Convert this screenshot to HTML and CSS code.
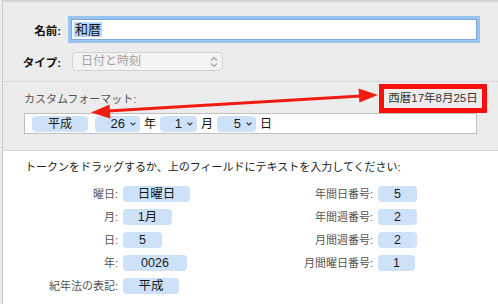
FILE: index.html
```html
<!DOCTYPE html>
<html>
<head>
    <title>日付の書式</title>
    <link rel="stylesheet" href="styles.css">
</head>
<body>
    <div class="sheet">
        <div class="top">
            <div class="field-row name-row">
                <label class="field-label">名前:</label>
                <div class="name-input"><span class="selected">和暦</span></div>
            </div>
            <div class="field-row type-row">
                <label class="field-label">タイプ:</label>
                <div class="popup">
                    <span>日付と時刻</span>
                    <svg class="updown" width="8" height="12" viewBox="0 0 8 12">
                        <path d="M1 4.5 L4 1.5 L7 4.5 M1 7.5 L4 10.5 L7 7.5" fill="none" stroke="#a2a2a2" stroke-width="1.2"/>
                    </svg>
                </div>
            </div>
        </div>

        <div class="middle">
            <div class="format-head">
                <span class="format-label">カスタムフォーマット:</span>
                <div class="preview">西暦17年8月25日</div>
            </div>
            <div class="format-field">
                <span class="token first">平成</span>
                <span class="token menu w45">26 <svg width="6" height="4" viewBox="0 0 6 4"><path d="M0.6 0.6 L3 3 L5.4 0.6" fill="none" stroke="#333" stroke-width="1.2"/></svg></span>
                <span class="plain">年</span>
                <span class="token menu w37">1 <svg width="6" height="4" viewBox="0 0 6 4"><path d="M0.6 0.6 L3 3 L5.4 0.6" fill="none" stroke="#333" stroke-width="1.2"/></svg></span>
                <span class="plain">月</span>
                <span class="token menu w39">5 <svg width="6" height="4" viewBox="0 0 6 4"><path d="M0.6 0.6 L3 3 L5.4 0.6" fill="none" stroke="#333" stroke-width="1.2"/></svg></span>
                <span class="plain">日</span>
            </div>
        </div>

        <div class="lower">
            <p class="hint">トークンをドラッグするか、上のフィールドにテキストを入力してください:</p>
            <div class="token-grid">
                <div class="col left">
                    <div class="row"><span class="row-label">曜日:</span><span class="token" style="width: 67px">日曜日</span></div>
                    <div class="row"><span class="row-label">月:</span><span class="token" style="width: 49px">1月</span></div>
                    <div class="row"><span class="row-label">日:</span><span class="token" style="width: 39px">5</span></div>
                    <div class="row"><span class="row-label">年:</span><span class="token" style="width: 64px">0026</span></div>
                    <div class="row"><span class="row-label">紀年法の表記:</span><span class="token" style="width: 56px">平成</span></div>
                </div>
                <div class="col right">
                    <div class="row"><span class="row-label">年間日番号:</span><span class="token" style="width: 39px">5</span></div>
                    <div class="row"><span class="row-label">年間週番号:</span><span class="token" style="width: 39px">2</span></div>
                    <div class="row"><span class="row-label">月間週番号:</span><span class="token" style="width: 39px">2</span></div>
                    <div class="row"><span class="row-label">月間曜日番号:</span><span class="token" style="width: 37px">1</span></div>
                </div>
            </div>
        </div>
    </div>

    <!-- annotation arrow drawn over the sheet -->
    <svg class="arrow" width="498" height="304" viewBox="0 0 498 304">
        <line x1="108" y1="111" x2="361" y2="96" stroke="#f21d12" stroke-width="3"/>
        <polygon points="91,112.5 110.4,118.5 109.6,104.5" fill="#f21d12"/>
        <polygon points="378,95 358.6,88.6 359.4,102.6" fill="#f21d12"/>
    </svg>
</body>
</html>
```

FILE: styles.css
```css
body {
    margin: 0;
    background-color: #ececec;
    font-family: "Liberation Sans", "Noto Sans CJK JP", sans-serif;
    font-size: 11px;
    color: #222;
    height: 304px;
    overflow: hidden;
    position: relative;
}
.sheet {
    margin-left: 2px;
    border-left: 1px solid #c9c9c9;
    height: 304px;
    box-shadow: inset 0 3px 3px -2px rgba(0,0,0,0.18);
}
.top {
    height: 82px;
    box-sizing: border-box;
    padding-top: 19px;
    border-bottom: 1px solid #d6d6d6;
}
.field-row {
    display: flex;
    align-items: center;
}
.field-label {
    width: 58px;
    text-align: right;
    font-weight: bold;
    font-size: 11.5px;
    color: #111;
}
.name-row {
    height: 21px;
}
.name-input {
    margin-left: 10px;
    width: 406px;
    height: 21px;
    box-sizing: border-box;
    border: 1px solid #80a8d8;
    box-shadow: 0 0 0 3px #98c4f2;
    background-color: white;
    display: flex;
    align-items: center;
    padding-left: 2px;
}
.selected {
    background-color: #b4d6fc;
    font-size: 13px;
    line-height: 15px;
    padding: 0 1px;
    color: #111;
}
.type-row {
    margin-top: 12px;
}
.popup {
    margin-left: 11px;
    width: 151px;
    height: 19px;
    box-sizing: border-box;
    border: 1px solid #d2d2d2;
    border-radius: 4px;
    background-color: #f3f3f3;
    display: flex;
    align-items: center;
    justify-content: space-between;
    padding: 0 4px 0 8px;
    color: #a4a4a4;
    font-size: 12px;
    line-height: 17px;
}
.middle {
    height: 69px;
    box-sizing: border-box;
    padding: 2px 21px 0 21px;
    border-bottom: 1px solid #d6d6d6;
}
.format-head {
    display: flex;
    justify-content: space-between;
    align-items: center;
    height: 29px;
}
.format-label {
    color: #555;
    line-height: 14px;
}
.preview {
    margin-right: -10px;
    width: 108px;
    height: 29px;
    box-sizing: border-box;
    border: 5px solid #f8110c;
    text-align: center;
    font-size: 11.5px;
    line-height: 19px;
    color: #333;
}
.format-field {
    height: 21px;
    box-sizing: border-box;
    border: 1px solid #bfbfbf;
    background-color: white;
    display: flex;
    align-items: center;
    gap: 4px;
    padding-left: 7px;
}
.token {
    display: inline-flex;
    align-items: center;
    justify-content: center;
    height: 16px;
    border-radius: 4px;
    background-color: #cde2f8;
    font-size: 12.5px;
    line-height: 16px;
    color: #1a1a1a;
}
.token.first {
    width: 56px;
    margin-right: 3px;
    font-size: 12px;
}
.token.menu {
    justify-content: flex-end;
    gap: 5px;
    padding-right: 4px;
    box-sizing: border-box;
    font-size: 13px;
}
.w45 { width: 45px; }
.w37 { width: 37px; }
.w39 { width: 39px; }
.plain {
    font-size: 12px;
    line-height: 16px;
    color: #111;
}
.lower {
    background-color: white;
    height: 153px;
}
.hint {
    margin: 0;
    padding: 8px 0 0 22px;
    line-height: 16px;
    color: #222;
}
.token-grid {
    display: flex;
    margin-top: 7px;
}
.col {
    display: flex;
    flex-direction: column;
}
.col.left {
    width: 250px;
}
.row {
    display: flex;
    align-items: center;
    height: 23px;
    gap: 5px;
}
.left .row-label {
    width: 115px;
}
.right .row-label {
    width: 120px;
}
.row-label {
    text-align: right;
    color: #555;
    line-height: 14px;
}
.arrow {
    position: absolute;
    top: 0;
    left: 0;
    pointer-events: none;
}
```
